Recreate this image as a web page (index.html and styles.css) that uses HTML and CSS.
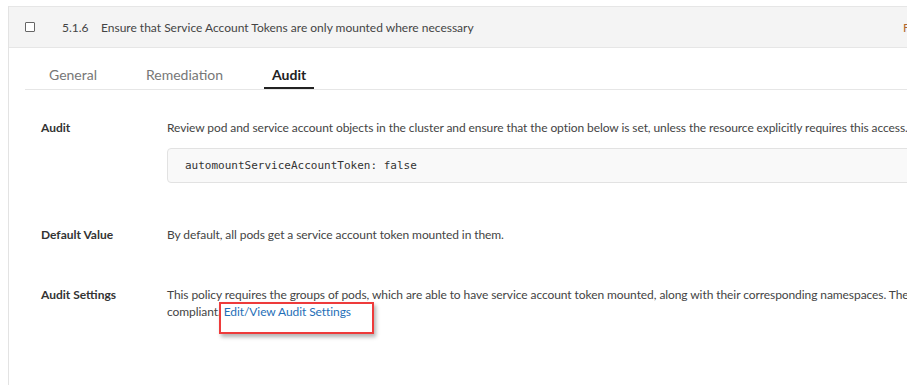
FILE: index.html
```html
<!DOCTYPE html>
<html lang="en">
<head>
  <meta charset="UTF-8" />
  <title>Benchmark Rule 5.1.6</title>
  <link rel="stylesheet" href="styles.css">
</head>
<body>
  <div class="panel">
    <div class="rule-head">
      <span class="check"></span>
      <span class="rule-num">5.1.6</span>
      <span class="rule-title">Ensure that Service Account Tokens are only mounted where necessary</span>
      <span class="rule-status">Fail</span>
    </div>

    <div class="tabs">
      <div class="tab">General</div>
      <div class="tab">Remediation</div>
      <div class="tab active">Audit</div>
    </div>

    <div class="details">
      <div class="row">
        <div class="label">Audit</div>
        <div class="value">
          <p>Review pod and service account objects in the cluster and ensure that the option below is set, unless the resource explicitly requires this access.</p>
          <pre class="code">automountServiceAccountToken: false</pre>
        </div>
      </div>

      <div class="row">
        <div class="label">Default Value</div>
        <div class="value">
          <p>By default, all pods get a service account token mounted in them.</p>
        </div>
      </div>

      <div class="row">
        <div class="label">Audit Settings</div>
        <div class="value">
          <p>This policy requires the groups of pods, which are able to have service account token mounted, along with their corresponding namespaces. The rest of the pods are expected to have tokens disabled to be<br>compliant. <span class="marked"><a href="#" class="link">Edit/View Audit Settings</a></span></p>
        </div>
      </div>
    </div>
  </div>
</body>
</html>
```

FILE: styles.css
```css
* {
  box-sizing: border-box;
  margin: 0;
  padding: 0;
}

body {
  font-family: 'Lato', 'Noto Sans', sans-serif;
  font-size: 12px;
  color: #444;
  background: #fff;
  overflow: hidden;
  height: 385px;
}

.panel {
  width: 1400px;
  margin: 6px 0 0 8px;
  border-left: 1px solid #e3e3e3;
  min-height: 400px;
}

/* Rule header row */
.rule-head {
  display: flex;
  align-items: center;
  height: 42px;
  background: #f4f4f4;
  border-top: 1px solid #e6e6e6;
  border-bottom: 1px solid #e6e6e6;
  padding-left: 16px;
}

.check {
  width: 10px;
  height: 10px;
  border: 1px solid #666;
  border-radius: 1px;
  background: #fff;
}

.rule-num {
  margin-left: 27px;
  width: 39px;
  color: #444;
}

.rule-title {
  width: 802px;
  color: #444;
}

.rule-status {
  color: #b0692e;
}

/* Tabs */
.tabs {
  display: flex;
  gap: 33px;
  margin-left: 16px;
  padding-left: 16px;
  height: 42px;
  align-items: flex-end;
  border-bottom: 1px solid #e6e6e6;
}

.tab {
  font-size: 14px;
  color: #777;
  padding: 0 8px 4px;
  border-bottom: 2px solid transparent;
}

.tab.active {
  color: #222;
  font-weight: 700;
  border-bottom-color: #222;
}

/* Details */
.details {
  padding-top: 29px;
}

.row {
  display: grid;
  grid-template-columns: 126px 1fr;
  padding-left: 32px;
  margin-bottom: 43px;
}

.label {
  font-weight: 700;
  color: #333;
  line-height: 17px;
}

.value p {
  line-height: 17px;
  color: #444;
  white-space: nowrap;
  letter-spacing: -0.08px;
}

.code {
  margin-top: 12px;
  height: 35px;
  padding: 0 17px;
  line-height: 33px;
  font-family: 'DejaVu Sans Mono', 'Liberation Mono', monospace;
  font-size: 11px;
  color: #333;
  background: #f9f9f9;
  border: 1px solid #e2e2e2;
  border-radius: 4px;
}

.link {
  color: #1f6fb8;
  text-decoration: none;
}

/* annotation box drawn over the link */
.marked {
  position: relative;
}

.marked::after {
  content: '';
  position: absolute;
  box-sizing: border-box;
  left: -5px;
  top: -2px;
  width: 155px;
  height: 32px;
  border: 2px solid #ee3b3b;
  box-shadow: 2px 3px 4px rgba(0, 0, 0, 0.3);
}
```
